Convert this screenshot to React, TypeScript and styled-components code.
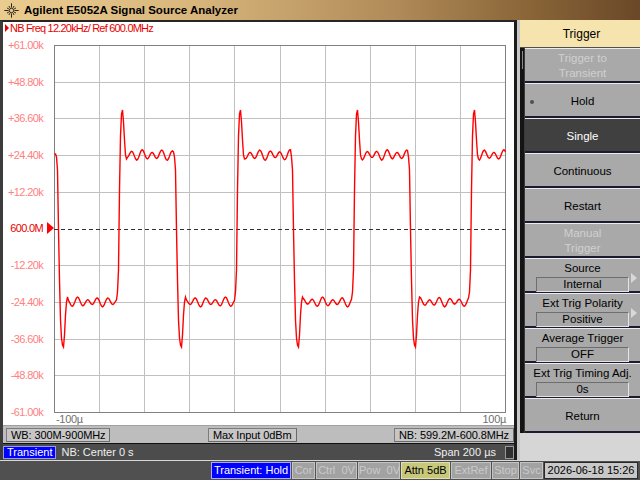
import React from 'react';
import styled, { createGlobalStyle, css } from 'styled-components';

const GlobalStyle = createGlobalStyle`
  html, body { margin: 0; padding: 0; background: #505050; }
  body { font-family: "Liberation Sans", Arial, sans-serif; font-size: 11px; }
  * { box-sizing: border-box; }
`;

const Screen = styled.div`
  width: 640px;
  height: 480px;
  display: flex;
  flex-direction: column;
  overflow: hidden;
  background: #c8c8c8;
`;

const TitleBar = styled.div`
  height: 20px;
  flex: none;
  display: flex;
  align-items: center;
  gap: 5px;
  padding-left: 4px;
  background: linear-gradient(90deg, #ebcc8f 0%, #d8b67c 30%, #b08a58 62%, #8a6638 82%, #6a4828 100%);
  color: #000;
  font-weight: bold;
  font-size: 11.5px;
`;

const Body = styled.div`
  flex: 1;
  display: flex;
  min-height: 0;
`;

const LeftPane = styled.div`
  width: 517px;
  display: flex;
  flex-direction: column;
  border-left: 3px solid #3c3c3c;
  border-right: 3px solid #1c1c1c;
  border-top: 2px solid #262626;
`;

const PlotArea = styled.div`
  flex: 1;
  background: #fff;
  display: flex;
  flex-direction: column;
`;

const Heading = styled.div`
  height: 12px;
  display: flex;
  align-items: center;
  gap: 1px;
  padding-left: 2px;
  color: #e80000;
  font-size: 11px;
  letter-spacing: -0.8px;
  line-height: 12px;
`;

const HeadArrow = styled.span`
  width: 0;
  height: 0;
  border-left: 4px solid #e80000;
  border-top: 4px solid transparent;
  border-bottom: 4px solid transparent;
`;

const ChartRow = styled.div`
  display: flex;
  align-items: flex-start;
  margin-top: 5px;
`;

const Axis = styled.div`
  width: 51px;
  height: 379px;
  display: flex;
  flex-direction: column;
  justify-content: space-between;
`;

const AxisLabel = styled.div<{ $ref?: boolean }>`
  height: 12px;
  line-height: 12px;
  display: flex;
  justify-content: flex-end;
  align-items: center;
  font-size: 11px;
  letter-spacing: -0.65px;
  color: ${(p) => (p.$ref ? '#e80000' : '#ff8080')};
`;

const MarkerSlot = styled.span`
  width: 11px;
  height: 12px;
  display: flex;
  justify-content: flex-end;
  align-items: center;
`;

const RefMarker = styled.span`
  width: 0;
  height: 0;
  border-left: 7px solid #ff0000;
  border-top: 6px solid transparent;
  border-bottom: 6px solid transparent;
`;

const Graph = styled.div`
  margin-top: 6px;
  width: 452px;
  display: flex;
  flex-direction: column;
`;

const TimeAxis = styled.div`
  height: 12px;
  display: flex;
  justify-content: space-between;
  padding: 0 0 0 2px;
  color: #707070;
  font-size: 11px;
  letter-spacing: -0.3px;
  line-height: 12px;
`;

const InfoBar = styled.div`
  height: 18px;
  background: #bdbdbd;
  display: flex;
  align-items: center;
  justify-content: space-between;
  padding: 0 0 0 3px;
  border-top: 1px solid #a0a0a0;
`;

const InfoBox = styled.div`
  height: 14px;
  padding: 0 4px;
  line-height: 12px;
  background: #c6c6c6;
  border: 1px solid;
  border-color: #7c7c7c #6a6a6a #6a6a6a #7c7c7c;
  color: #000;
  font-size: 11px;
  letter-spacing: -0.1px;
`;

const ModeBar = styled.div`
  height: 17px;
  background: #4c4c4c;
  border-top: 1px solid #101010;
  display: flex;
  align-items: center;
  gap: 5px;
  color: #f0f0f0;
  font-size: 11px;
`;

const ModeTag = styled.div`
  height: 13px;
  line-height: 11px;
  padding: 0 3px;
  background: #0000ff;
  border: 1px solid #9c9cd8;
  color: #fff;
`;

const Grow = styled.div`
  flex: 1;
`;

const SmallBox = styled.div`
  width: 9px;
  height: 13px;
  background: #303030;
  border: 1px solid #9a9a9a;
  margin-left: 4px;
`;

const Gutter = styled.div`
  width: 3px;
  background: #c8c8c8;
`;

const RightPanel = styled.div`
  width: 120px;
  display: flex;
  flex-direction: column;
  background: #d6d6d6;
`;

const MenuTitle = styled.div`
  height: 28px;
  background: #f6e4ae;
  border-bottom: 1px solid #505050;
  display: flex;
  align-items: center;
  justify-content: center;
  padding-left: 3px;
  font-size: 12px;
  color: #000;
`;

const KeyArea = styled.div`
  display: flex;
`;

const Rail = styled.div`
  width: 5px;
  background: #141414;
  border-right: 1px solid #3a3a3a;
  display: flex;
  justify-content: center;
`;

const RailLine = styled.div`
  width: 1px;
  margin-top: 3px;
  height: 18px;
  background: #8a8a8a;
`;

const Keys = styled.div`
  width: 115px;
  display: flex;
  flex-direction: column;
`;

const Key = styled.div<{ $active?: boolean; $disabled?: boolean; $value?: boolean }>`
  position: relative;
  height: 35px;
  background: #a9a9a9;
  border-top: 1px solid #ececec;
  border-bottom: 2px solid #1a1a30;
  display: flex;
  flex-direction: column;
  align-items: center;
  justify-content: center;
  padding-top: 2px;
  color: #000;
  font-size: 11.5px;
  line-height: 15px;
  ${(p) =>
    p.$active &&
    css`
      background: #404040;
      color: #fff;
    `}
  ${(p) =>
    p.$disabled &&
    css`
      color: #d0d0d0;
    `}
  ${(p) =>
    p.$value &&
    css`
      justify-content: flex-start;
      padding-top: 3px;
      line-height: 13px;
    `}
`;

const Dot = styled.span`
  position: absolute;
  left: 5px;
  top: 16px;
  width: 4px;
  height: 4px;
  border-radius: 50%;
  background: #505050;
`;

const ValueRow = styled.div`
  width: 100%;
  display: flex;
  align-items: flex-start;
  padding-left: 11px;
  margin-top: 2px;
`;

const ValueBox = styled.div`
  width: 93px;
  height: 15px;
  line-height: 13px;
  text-align: center;
  background: #a6a6a6;
  border: 1px solid;
  border-color: #6e6e6e #e4e4e4 #e4e4e4 #6e6e6e;
`;

const Arrow = styled.span`
  margin-left: 2px;
  margin-top: -4px;
  width: 0;
  height: 0;
  border-left: 6px solid #d8d8d8;
  border-top: 5px solid transparent;
  border-bottom: 5px solid transparent;
`;

const Filler = styled.div`
  flex: 1;
  background: #d6d6d6;
`;

const StatusBar = styled.div`
  height: 20px;
  flex: none;
  background: #505050;
  border-top: 1px solid #d8d8d8;
  display: flex;
  align-items: center;
  justify-content: flex-end;
  gap: 1px;
  padding-right: 2px;
`;

type Tone = 'blue' | 'off' | 'warn' | 'plain';

const toneStyles: Record<Tone, ReturnType<typeof css>> = {
  blue: css`
    background: #0000ff;
    color: #fff;
    border-color: #a8a8ff;
  `,
  off: css`
    background: #a2a2a2;
    color: #cacaca;
    border-color: #c4c4c4;
  `,
  warn: css`
    background: #c8c87c;
    color: #000;
    border-color: #e0e0b0;
  `,
  plain: css`
    background: #c8c8c8;
    color: #000;
    border-color: #2a2a2a;
  `,
};

const StatusItem = styled.div<{ $tone: Tone; $w: number }>`
  width: ${(p) => p.$w}px;
  height: 17px;
  line-height: 15px;
  border: 1px solid;
  text-align: center;
  white-space: pre;
  overflow: hidden;
  font-size: 11px;
  ${(p) => toneStyles[p.$tone]}
`;

const Spark = () => (
  <svg width="15" height="15" viewBox="0 0 15 15">
    {Array.from({ length: 12 }).map((_, i) => {
      const a = (i * Math.PI) / 6;
      const r1 = 3;
      const r2 = i % 3 === 0 ? 7.2 : 5.2;
      return (
        <line
          key={i}
          x1={7.5 + r1 * Math.cos(a)}
          y1={7.5 + r1 * Math.sin(a)}
          x2={7.5 + r2 * Math.cos(a)}
          y2={7.5 + r2 * Math.sin(a)}
          stroke="#2a2418"
          strokeWidth="1"
        />
      );
    })}
    <circle cx="7.5" cy="7.5" r="2.2" fill="none" stroke="#2a2418" strokeWidth="1" />
  </svg>
);

// trace, pixel coords of the 452x368 plot
const trace = (() => {
  const H = 155;
  const L = 302;
  const edges: [number, 'r' | 'f'][] = [
    [57, 'f'], [118, 'r'], [175, 'f'], [236, 'r'],
    [292, 'f'], [353, 'r'], [409, 'f'], [470, 'r'],
  ];
  const rise = [292, 270, 190, 136, 114, 110, 122, 140, 155, 159];
  const fall = [157, 170, 230, 280, 320, 338, 345, 347, 335, 315, 302, 297];
  const out: string[] = [];
  for (let x = 54; x <= 505; x++) {
    let e: [number, 'r' | 'f'] | null = null;
    for (const ed of edges) if (x >= ed[0] - 1) e = ed;
    const wob = 1.4 * Math.sin(x / 2.6);
    let y: number;
    if (!e) y = H - 1;
    else {
      const t = x - e[0];
      if (e[1] === 'r') {
        y = t <= 8 ? rise[t + 1] : H + 4 * Math.cos((2 * Math.PI * (t - 8.5)) / 10) + wob;
      } else {
        y = t <= 10 ? fall[t + 1] : L - 3.5 * Math.cos((2 * Math.PI * (t - 10)) / 10) + wob;
      }
    }
    out.push(`${x - 54 + 0.5},${(y - 45).toFixed(1)}`);
  }
  return out.join(' ');
})();

const Chart = () => {
  const xs = Array.from({ length: 11 }, (_, i) => 0.5 + Math.round(45.1 * i));
  const ys = Array.from({ length: 11 }, (_, j) => 0.5 + Math.round(36.7 * j));
  return (
    <svg width="452" height="368" style={{ display: 'block' }}>
      {xs.slice(1, -1).map((x) => (
        <line key={`v${x}`} x1={x} y1={0} x2={x} y2={368} stroke="#c0c0c0" />
      ))}
      {ys.slice(1, -1).map((y, j) =>
        j === 4 ? null : <line key={`h${y}`} x1={0} y1={y} x2={452} y2={y} stroke="#c0c0c0" />
      )}
      <rect x="0.5" y="0.5" width="451" height="367" fill="none" stroke="#808080" />
      <line x1={0} y1={ys[5]} x2={452} y2={ys[5]} stroke="#303030" strokeDasharray="4 3" />
      <polyline points={trace} fill="none" stroke="#ff0000" strokeWidth="1.4" />
    </svg>
  );
};

const yLabels = [
  '+61.00k', '+48.80k', '+36.60k', '+24.40k', '+12.20k', '600.0M',
  '-12.20k', '-24.40k', '-36.60k', '-48.80k', '-61.00k',
];

type KeyDef = {
  label: string[];
  disabled?: boolean;
  active?: boolean;
  dot?: boolean;
  value?: string;
  arrow?: boolean;
};

const keys: KeyDef[] = [
  { label: ['Trigger to', 'Transient'], disabled: true },
  { label: ['Hold'], dot: true },
  { label: ['Single'], active: true },
  { label: ['Continuous'] },
  { label: ['Restart'] },
  { label: ['Manual', 'Trigger'], disabled: true },
  { label: ['Source'], value: 'Internal', arrow: true },
  { label: ['Ext Trig Polarity'], value: 'Positive', arrow: true },
  { label: ['Average Trigger'], value: 'OFF' },
  { label: ['Ext Trig Timing Adj.'], value: '0s' },
  { label: ['Return'] },
];

const status: { text: string; tone: Tone; w: number }[] = [
  { text: 'Transient: Hold', tone: 'blue', w: 80 },
  { text: 'Cor', tone: 'off', w: 23 },
  { text: 'Ctrl  0V', tone: 'off', w: 41 },
  { text: 'Pow  0V', tone: 'off', w: 42 },
  { text: 'Attn 5dB', tone: 'warn', w: 49 },
  { text: 'ExtRef', tone: 'off', w: 40 },
  { text: 'Stop', tone: 'off', w: 27 },
  { text: 'Svc', tone: 'off', w: 23 },
  { text: '2026-06-18 15:26', tone: 'plain', w: 94 },
];

export default function App() {
  return (
    <Screen>
      <GlobalStyle />
      <TitleBar>
        <Spark />
        Agilent E5052A Signal Source Analyzer
      </TitleBar>
      <Body>
        <LeftPane>
          <PlotArea>
            <Heading>
              <HeadArrow />
              NB Freq 12.20kHz/ Ref 600.0MHz
            </Heading>
            <ChartRow>
              <Axis>
                {yLabels.map((l, i) => (
                  <AxisLabel key={l} $ref={i === 5}>
                    {l}
                    <MarkerSlot>{i === 5 && <RefMarker />}</MarkerSlot>
                  </AxisLabel>
                ))}
              </Axis>
              <Graph>
                <Chart />
                <TimeAxis>
                  <span>-100µ</span>
                  <span>100µ</span>
                </TimeAxis>
              </Graph>
            </ChartRow>
          </PlotArea>
          <InfoBar>
            <InfoBox>WB: 300M-900MHz</InfoBox>
            <InfoBox>Max Input 0dBm</InfoBox>
            <InfoBox>NB: 599.2M-600.8MHz</InfoBox>
          </InfoBar>
          <ModeBar>
            <ModeTag>Transient</ModeTag>
            <span>NB: Center 0 s</span>
            <Grow />
            <span>Span 200 µs</span>
            <SmallBox />
          </ModeBar>
        </LeftPane>
        <Gutter />
        <RightPanel>
          <MenuTitle>Trigger</MenuTitle>
          <KeyArea>
            <Rail>
              <RailLine />
            </Rail>
            <Keys>
              {keys.map((k) => (
                <Key
                  key={k.label.join(' ')}
                  $active={k.active}
                  $disabled={k.disabled}
                  $value={!!k.value}
                >
                  {k.dot && <Dot />}
                  {k.label.map((l) => (
                    <div key={l}>{l}</div>
                  ))}
                  {k.value && (
                    <ValueRow>
                      <ValueBox>{k.value}</ValueBox>
                      {k.arrow && <Arrow />}
                    </ValueRow>
                  )}
                </Key>
              ))}
            </Keys>
          </KeyArea>
          <Filler />
        </RightPanel>
      </Body>
      <StatusBar>
        {status.map((s) => (
          <StatusItem key={s.text} $tone={s.tone} $w={s.w}>
            {s.text}
          </StatusItem>
        ))}
      </StatusBar>
    </Screen>
  );
}
